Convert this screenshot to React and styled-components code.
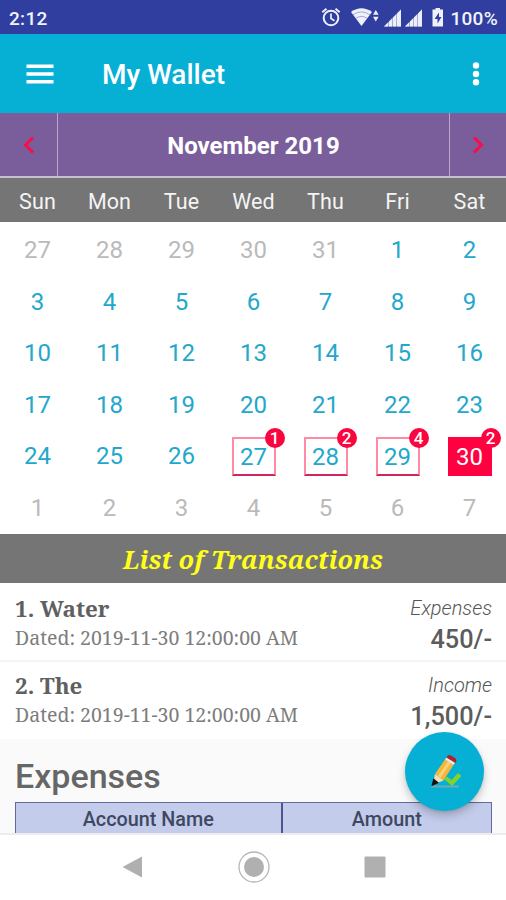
import React from "react";
import styled, { createGlobalStyle, css } from "styled-components";

const GlobalStyle = createGlobalStyle`
  * { box-sizing: border-box; }
  body { margin: 0; background: #fff; font-family: Roboto, sans-serif; }
`;

const Screen = styled.div`
  position: relative;
  width: 506px;
  height: 900px;
  overflow: hidden;
  display: flex;
  flex-direction: column;
  background: #fff;
`;

const StatusBar = styled.header`
  height: 34px;
  flex: none;
  display: flex;
  align-items: center;
  justify-content: space-between;
  padding: 2px 8px 0 9px;
  background: #303f9f;
  color: #f2f3fb;
  font-size: 19px;
  font-weight: 500;
  letter-spacing: 0.3px;
`;

const StatusIcons = styled.svg`
  display: block;
  width: 126px;
  height: 24px;
`;

const StatusGroup = styled.div`
  display: flex;
  align-items: center;
  gap: 4px;
`;

const AppBar = styled.div`
  height: 79px;
  flex: none;
  display: flex;
  align-items: center;
  padding: 0 24px 0 26px;
  background: #06b0d5;
  color: #fff;
`;

const AppTitle = styled.h1`
  flex: 1;
  margin: 2px 0 0 48px;
  font-size: 28px;
  line-height: 32px;
  font-weight: 500;
`;

const MenuIcon = styled.svg`
  width: 28px;
  height: 24px;
`;

const MoreIcon = styled.svg`
  width: 12px;
  height: 28px;
`;

const MonthBar = styled.div`
  height: 65px;
  flex: none;
  display: grid;
  grid-template-columns: 57px 1fr 56px;
  background: #7a5e9c;
  border-bottom: 2px solid #c9bfd3;
`;

const MonthName = styled.div`
  display: flex;
  align-items: center;
  justify-content: center;
  border: solid #b9a8cc;
  border-width: 0 1.5px;
  color: #fff;
  font-size: 24px;
  font-weight: 700;
  padding-top: 2px;
`;

const MonthArrow = styled.button`
  display: flex;
  align-items: center;
  justify-content: center;
  border: 0;
  padding: 0;
  background: transparent;
  color: #fa0d48;
`;

const Week = styled.div`
  flex: none;
  display: grid;
  grid-template-columns: repeat(7, 72px);
  padding-left: 1.5px;
`;

const WeekHeader = styled(Week)`
  height: 44px;
  align-items: center;
  justify-items: center;
  background: #757575;
  color: #f4f4f4;
  font-size: 21.5px;
  padding-top: 2px;
  letter-spacing: 0.1px;
`;

const Month = styled.div`
  flex: none;
  height: 312px;
  padding-top: 2.5px;
  background: #fff;
`;

const Day = styled.div`
  height: 51.5px;
  display: flex;
  align-items: center;
  justify-content: center;
  font-size: 24px;
  letter-spacing: 0;
  color: ${(p) => (p.$muted ? "#bababa" : "#23a7cb")};
`;

const DayMark = styled.div`
  position: relative;
  width: 44px;
  height: 39px;
  display: flex;
  align-items: center;
  justify-content: center;
  padding-top: 1px;
  border: 2px solid #fc8ba3;
  border-bottom-color: #d0245c;
  ${(p) =>
    p.$selected &&
    css`
      background: #ff0040;
      border-color: #ff0040;
      color: #fff;
    `}
`;

const Count = styled.span`
  position: absolute;
  top: -11px;
  right: -11px;
  width: 20px;
  height: 20px;
  border-radius: 50%;
  background: #fa0540;
  color: #fff;
  font-size: 17px;
  line-height: 21px;
  text-align: center;
  font-weight: 500;
`;

const ListTitle = styled.h2`
  flex: none;
  height: 49px;
  margin: 0;
  background: #757575;
  color: #ffff1a;
  text-align: center;
  font: italic 700 25.3px/50px "Noto Serif", "DejaVu Serif Condensed", "DejaVu Serif", serif;
`;

const Transaction = styled.article`
  flex: none;
  height: ${(p) => (p.$last ? "77px" : "79px")};
  display: flex;
  justify-content: space-between;
  padding: ${(p) => (p.$last ? "10px" : "12px")} 14px 0 15px;
  border-bottom: ${(p) => (p.$last ? "0" : "2px")} solid #f5f5f5;
  background: #fff;
  color: #606060;
`;

const Column = styled.div`
  display: flex;
  flex-direction: column;
  align-items: ${(p) => (p.$end ? "flex-end" : "flex-start")};
  white-space: nowrap;
`;

const Name = styled.div`
  font: 700 22.4px/28px "Noto Serif", "DejaVu Serif Condensed", "DejaVu Serif", serif;
`;

const Dated = styled.div`
  font: 400 19.5px/30px "Noto Serif", "DejaVu Serif Condensed", "DejaVu Serif", serif;
  color: #7d7d7d;
`;

const Kind = styled.div`
  font-size: 20px;
  line-height: 26px;
  font-style: italic;
  font-weight: 300;
  color: #555;
`;

const Amount = styled.div`
  font-size: 25.3px;
  line-height: 37px;
  font-weight: 500;
  color: #5c5c5c;
`;

const Summary = styled.section`
  flex: none;
  height: 94px;
  overflow: hidden;
  padding: 0 14px 0 15px;
  background: #fafafa;
`;

const SummaryTitle = styled.h3`
  margin: 0;
  height: 63px;
  padding-top: 17px;
  font-size: 34px;
  line-height: 40px;
  font-weight: 500;
  color: #666;
`;

const Table = styled.div`
  display: grid;
  grid-template-columns: 264.5px 1fr;
  height: 40px;
  border: 1.5px solid #626b9f;
  background: #c3cceb;
`;

const HeadCell = styled.div`
  padding-top: 4px;
  text-align: center;
  font-size: 19.8px;
  line-height: 26px;
  font-weight: 500;
  color: #3f4761;
  & + & {
    border-left: 2px solid #4c558e;
  }
`;

const NavBar = styled.nav`
  flex: 1;
  border-top: 2px solid #ececf0;
  background: #fff;
  display: grid;
  grid-template-columns: repeat(3, 121px);
  justify-content: center;
  justify-items: center;
  align-items: center;
  padding: 0 0 2px 1px;
`;

const NavIcon = styled.svg`
  width: 34px;
  height: 34px;
`;

const Fab = styled.button`
  position: absolute;
  left: 405px;
  top: 732px;
  width: 79px;
  height: 79px;
  padding: 0;
  border: 0;
  border-radius: 50%;
  background: #06b0d5;
  box-shadow: 0 5px 8px rgba(0, 0, 0, 0.2), 0 1px 3px rgba(0, 0, 0, 0.1);
`;

const FabIcon = styled.svg`
  display: block;
  width: 79px;
  height: 79px;
`;

const weekdays = ["Sun", "Mon", "Tue", "Wed", "Thu", "Fri", "Sat"];
const counts = { 27: 1, 28: 2, 29: 4, 30: 2 };
const days = Array.from({ length: 42 }, (_, i) => {
  if (i < 5) return { n: 27 + i, muted: true };
  if (i < 35) return { n: i - 4, count: counts[i - 4] };
  return { n: i - 34, muted: true };
});

const transactions = [
  { name: "1. Water", date: "Dated: 2019-11-30 12:00:00 AM", kind: "Expenses", amount: "450/-" },
  { name: "2. The", date: "Dated: 2019-11-30 12:00:00 AM", kind: "Income", amount: "1,500/-" },
];

const Signal = ({ x }) => (
  <g transform={`translate(${x} 0)`}>
    <path d="M0 20.500 17 3.500V20.500Z" fill="#a5acdb" />
    <path d="M0 20.500 4 16.500V20.500ZM5 20.500V15.500L8 12.500V20.500ZM9 20.500V11.500L12 8.500V20.500ZM13 20.500V7.500L17 3.500V20.500Z" fill="#eceefa" />
  </g>
);

const StatusGlyphs = () => (
  <StatusIcons viewBox="0 0 126 24">
    <g fill="none" stroke="#eef0fb" strokeWidth="2">
      <circle cx="11" cy="12" r="7.300" />
      <path d="M11 7.500v5l3.500 2.200" strokeWidth="1.700" />
      <path d="M2.300 6.300 6.500 2.800M19.700 6.300 15.500 2.800" />
    </g>
    <path d="M31 6Q41.500 -1.500 52 6L41.500 20Z" fill="#eef0fb" />
    <path d="M33 8.800Q41.500 3 50 8.800M36 12.200Q41.500 8.500 47 12.200" fill="none" stroke="#8d96d0" strokeWidth="0.800" />
    <path d="M53 8.800 55.800 4 58.600 8.800ZM53 10.800 55.800 15.600 58.600 10.800Z" fill="#eef0fb" />
    <Signal x={64} />
    <Signal x={85} />
    <path d="M112.500 3.500h3V2h4.500v1.500h3V20.500H112.500Z" fill="#eef0fb" />
    <path d="M119 6.500 114.500 13h3v4.500l4-6.500h-2.500Z" fill="#303f9f" />
  </StatusIcons>
);

const Arrow = ({ d }) => (
  <svg width="14" height="20" viewBox="0 0 14 20" fill="none" stroke="currentColor" strokeWidth="3">
    <path d={d} />
  </svg>
);

export default function App() {
  return (
    <Screen>
      <GlobalStyle />
      <StatusBar>
        <span>2:12</span>
        <StatusGroup>
          <StatusGlyphs />
          <span>100%</span>
        </StatusGroup>
      </StatusBar>
      <AppBar>
        <MenuIcon viewBox="0 0 28 24" fill="#fff">
          <path d="M0.500 2.500h27v3.600h-27ZM0.500 10.200h27v3.600h-27ZM0.500 17.900h27v3.600h-27Z" />
        </MenuIcon>
        <AppTitle>My Wallet</AppTitle>
        <MoreIcon viewBox="0 0 12 28" fill="#fff">
          <circle cx="6" cy="5.500" r="3.200" />
          <circle cx="6" cy="14" r="3.200" />
          <circle cx="6" cy="22.300" r="3.200" />
        </MoreIcon>
      </AppBar>
      <MonthBar>
        <MonthArrow aria-label="Previous month">
          <Arrow d="M11 2.500 3.500 10 11 17.500" />
        </MonthArrow>
        <MonthName>November 2019</MonthName>
        <MonthArrow aria-label="Next month">
          <Arrow d="M3 2.500 10.500 10 3 17.500" />
        </MonthArrow>
      </MonthBar>
      <WeekHeader>
        {weekdays.map((d) => (
          <span key={d}>{d}</span>
        ))}
      </WeekHeader>
      <Month>
        <Week>
          {days.map((d, i) => (
            <Day key={i} $muted={d.muted}>
              {d.count ? (
                <DayMark $selected={d.n === 30}>
                  {d.n}
                  <Count>{d.count}</Count>
                </DayMark>
              ) : (
                d.n
              )}
            </Day>
          ))}
        </Week>
      </Month>
      <ListTitle>List of Transactions</ListTitle>
      {transactions.map((t, i) => (
        <Transaction key={t.name} $last={i === 1}>
          <Column>
            <Name>{t.name}</Name>
            <Dated>{t.date}</Dated>
          </Column>
          <Column $end>
            <Kind>{t.kind}</Kind>
            <Amount>{t.amount}</Amount>
          </Column>
        </Transaction>
      ))}
      <Summary>
        <SummaryTitle>Expenses</SummaryTitle>
        <Table>
          <HeadCell>Account Name</HeadCell>
          <HeadCell>Amount</HeadCell>
        </Table>
      </Summary>
      <NavBar>
        <NavIcon viewBox="0 0 34 34">
          <path d="M6.500 17 26 6.500V27.500Z" fill="#b0b0b0" />
        </NavIcon>
        <NavIcon viewBox="0 0 34 34">
          <circle cx="17" cy="17" r="15" fill="none" stroke="#b5b5b5" strokeWidth="1.300" />
          <circle cx="17" cy="17" r="10" fill="#b0b0b0" />
        </NavIcon>
        <NavIcon viewBox="0 0 34 34">
          <rect x="6.500" y="6.500" width="21" height="21" rx="1" fill="#b0b0b0" />
        </NavIcon>
      </NavBar>
      <Fab aria-label="Add transaction">
        <FabIcon viewBox="0 0 79 79">
          <path d="M26 53.500H54V55.500H26Z" fill="#6fa9b5" />
          <path d="M39.500 47 47 53.500 56 44 53 41.500 46.500 48.500 42 45Z" fill="#82d42a" stroke="#82d42a" strokeWidth="1" />
          <path d="M30 42 40 27.500 48.500 33 38.500 48.500Z" fill="#f3b73d" />
          <path d="M33 44 43 29.500 45.500 31 35.500 46Z" fill="#f9d274" />
          <path d="M40 27.500 41.500 25.500 50 30.500 48.500 33Z" fill="#f5e9da" />
          <path d="M41.500 25.500Q43 22 46 23.500L50 26Q52.500 28 50.500 31Z" fill="#b31f2c" />
          <path d="M30 42 38.500 48.500 28 52.500Z" fill="#f5ddb5" />
          <path d="M28.800 47.500 32.500 50.500 27.500 52.800Z" fill="#111" stroke="#111" strokeWidth="1.500" />
        </FabIcon>
      </Fab>
    </Screen>
  );
}
